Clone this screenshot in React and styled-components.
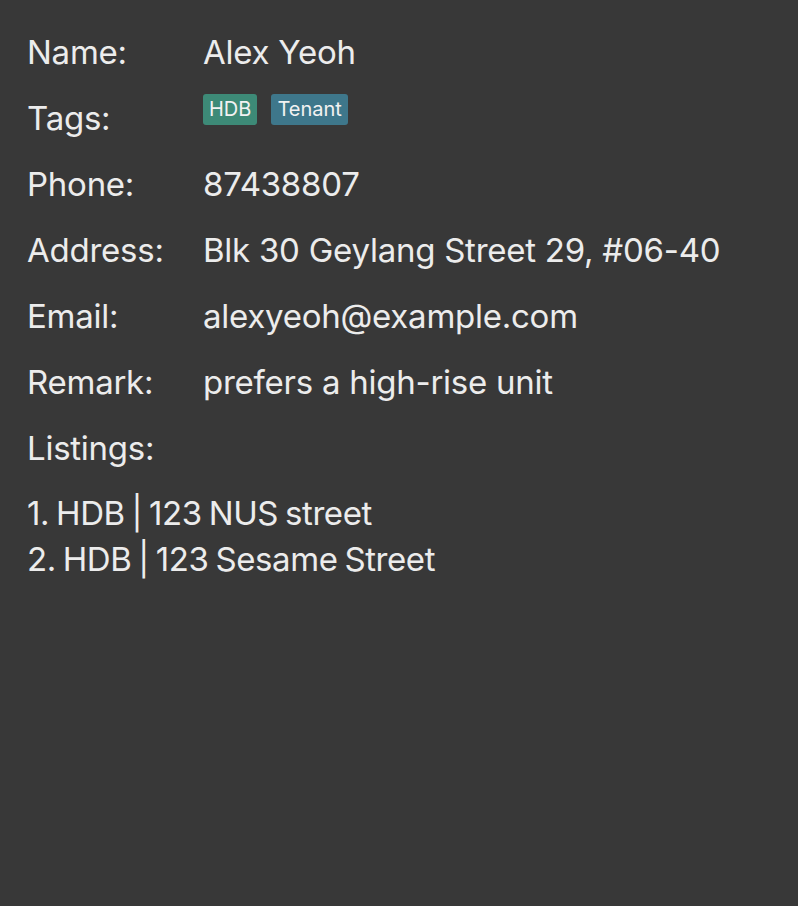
import React from "react";
import styled, { createGlobalStyle } from "styled-components";

const Global = createGlobalStyle`
  html, body { margin: 0; padding: 0; background: #383838; }
  body { font-family: Inter, "Noto Sans", sans-serif; }
`;

const Panel = styled.div`
  min-height: 906px;
  box-sizing: border-box;
  background: #383838;
  color: #ececec;
  padding: 33px 27px;
  display: flex;
  flex-direction: column;
  gap: 27px;
`;

const Row = styled.div`
  display: grid;
  grid-template-columns: 176px 1fr;
  align-items: start;
  font-size: 33px;
  line-height: 39px;
  letter-spacing: -0.25px;
`;

const Label = styled.div``;

const Value = styled.div``;

const Tags = styled.div`
  display: flex;
  gap: 14px;
  margin-top: -5px;
  letter-spacing: 0;
`;

const Tag = styled.span`
  display: inline-flex;
  align-items: center;
  height: 31px;
  padding: 0 6px;
  border-radius: 3px;
  font-size: 20px;
  line-height: 31px;
  color: #f2f2f2;
  background: ${(p) => p.$bg};
`;

const Listings = styled.div`
  font-size: 33px;
  line-height: 46px;
  letter-spacing: -0.4px;
  word-spacing: -2px;
  margin-top: -5px;
`;

const fields = [
  ["Phone:", "87438807"],
  ["Address:", "Blk 30 Geylang Street 29, #06-40"],
  ["Email:", "alexyeoh@example.com"],
  ["Remark:", "prefers a high-rise unit"],
];

export default function App() {
  return (
    <>
      <Global />
      <Panel>
        <Row>
          <Label>Name:</Label>
          <Value>Alex Yeoh</Value>
        </Row>
        <Row>
          <Label>Tags:</Label>
          <Tags>
            <Tag $bg="#3d8a77">HDB</Tag>
            <Tag $bg="#3e778b">Tenant</Tag>
          </Tags>
        </Row>
        {fields.map(([l, v]) => (
          <Row key={l}>
            <Label>{l}</Label>
            <Value>{v}</Value>
          </Row>
        ))}
        <Row>
          <Label>Listings:</Label>
        </Row>
        <Listings>
          <div>1. HDB | 123 NUS street</div>
          <div>2. HDB | 123 Sesame Street</div>
        </Listings>
      </Panel>
    </>
  );
}
